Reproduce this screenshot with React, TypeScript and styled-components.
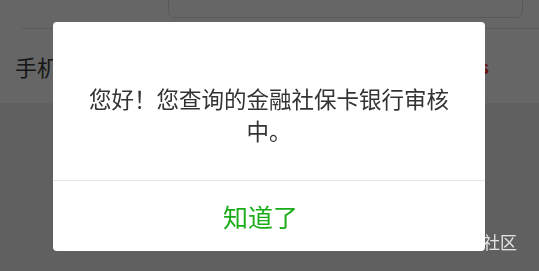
import React from 'react';
import styled, { createGlobalStyle } from 'styled-components';

const GlobalStyle = createGlobalStyle`
    html, body {
        margin: 0;
        padding: 0;
        height: 100%;
        overflow: hidden;
    }
    body {
        font-family: "Noto Sans CJK SC", "Noto Sans", sans-serif;
        background: #f0f0f0;
    }
`;

const Page = styled.div`
    min-height: 100vh;
    background: #f0f0f0;
    margin-top: -22px;
`;

const Form = styled.div`
    background: #ffffff;
`;

const FieldRow = styled.div`
    display: flex;
    margin-left: 22px;
    padding-bottom: 10px;
    border-bottom: 1px solid #e2e2e2;
`;

const InputBox = styled.div`
    margin-left: 146px;
    width: 355px;
    height: 40px;
    box-sizing: border-box;
    border: 1px solid #dedede;
    border-radius: 6px;
`;

const PhoneRow = styled.div`
    display: flex;
    align-items: center;
    justify-content: space-between;
    height: 74px;
    padding: 0 50px 0 15px;
`;

const Label = styled.span`
    font-size: 22px;
    color: #3a3a3a;
`;

const CodeLink = styled.span`
    font-size: 18px;
    font-weight: 700;
    color: #ff2a2a;
`;

const Overlay = styled.div`
    position: fixed;
    inset: 0;
    background: rgba(0, 0, 0, 0.6);
    display: flex;
    align-items: center;
    justify-content: center;
    padding: 2px 1px 0 0;
`;

const Watermark = styled.span`
    position: absolute;
    right: 22px;
    top: 229px;
    font-size: 17px;
    color: #e4e4e4;
`;

const Dialog = styled.div`
    position: relative;
    width: 432px;
    background: #ffffff;
    border-radius: 4px;
    overflow: hidden;
`;

const Message = styled.div`
    padding: 60px 30px 34px;
    font-size: 22.5px;
    line-height: 32px;
    color: #333333;
    text-align: center;
    word-break: break-all;
`;

const Footer = styled.div`
    display: flex;
    border-top: 1px solid #e5e5e5;
`;

const ActionButton = styled.button`
    flex: 1;
    height: 70px;
    border: 0;
    background: transparent;
    padding: 0 17px 0 0;
    font-family: inherit;
    font-size: 25px;
    color: #1aad19;
    cursor: pointer;
`;

const App: React.FC = () => {
    return (
        <>
            <GlobalStyle />
            <Page>
                <Form>
                    <FieldRow>
                        <InputBox />
                    </FieldRow>
                    <PhoneRow>
                        <Label>手机号</Label>
                        <CodeLink>60s</CodeLink>
                    </PhoneRow>
                </Form>
            </Page>
            <Overlay>
                <Watermark>卡农社区</Watermark>
                <Dialog>
                    <Message>您好！您查询的金融社保卡银行审核中。</Message>
                    <Footer>
                        <ActionButton>知道了</ActionButton>
                    </Footer>
                </Dialog>
            </Overlay>
        </>
    );
};

export default App;
